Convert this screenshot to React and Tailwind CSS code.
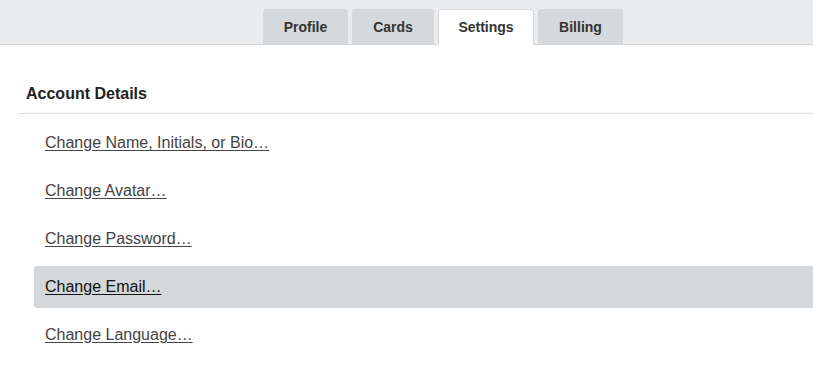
import React, { useState } from 'react';

const tabs = [
    { name: 'Profile', width: 'w-[85px]' },
    { name: 'Cards', width: 'w-[82px]' },
    { name: 'Settings', width: 'w-[96px]' },
    { name: 'Billing', width: 'w-[85px]' },
];

const links = [
    'Change Name, Initials, or Bio…',
    'Change Avatar…',
    'Change Password…',
    'Change Email…',
    'Change Language…',
];

const App = () => {
    const [active, setActive] = useState('Settings');
    const [hovered, setHovered] = useState('Change Email…');

    return (
        <div className="min-h-screen bg-white font-['Liberation_Sans',Arial,sans-serif] overflow-hidden">
            {/* tab bar */}
            <div className="h-[45px] bg-[#ebecee] border-b border-[#d5d8db] flex items-end">
                <div className="flex gap-[4px] ml-[263px] -mb-px">
                    {tabs.map((t) => (
                        <button
                            key={t.name}
                            onClick={() => setActive(t.name)}
                            className={
                                t.name === active
                                    ? `${t.width} h-[36px] pt-px rounded-t-[3px] bg-white border border-[#d5d8db] border-b-white text-[14px] font-bold text-[#333]`
                                    : `${t.width} h-[35px] pt-px mb-px rounded-t-[3px] bg-[#d6d9dc] text-[14px] font-bold text-[#333]`
                            }
                        >
                            {t.name}
                        </button>
                    ))}
                </div>
            </div>

            {/* content */}
            <div className="pl-[18px]">
                <div className="pt-[38px] pb-[8px] px-2 text-[16px] leading-[22px] font-bold text-[#222] border-b border-[#dcdcdc]">
                    Account Details
                </div>
                <ul className="mt-2 ml-4 flex flex-col gap-[6px]">
                    {links.map((l) => (
                        <li
                            key={l}
                            onMouseEnter={() => setHovered(l)}
                            className={`h-[42px] flex items-center pl-[11px] rounded-l-[3px] ${hovered === l ? 'bg-[#d5d8db]' : ''}`}
                        >
                            <a
                                href="#"
                                className={`text-[16px] underline underline-offset-[2px] ${hovered === l ? 'text-[#111]' : 'text-[#444]'}`}
                            >
                                {l}
                            </a>
                        </li>
                    ))}
                </ul>
            </div>
        </div>
    );
};

export default App;
